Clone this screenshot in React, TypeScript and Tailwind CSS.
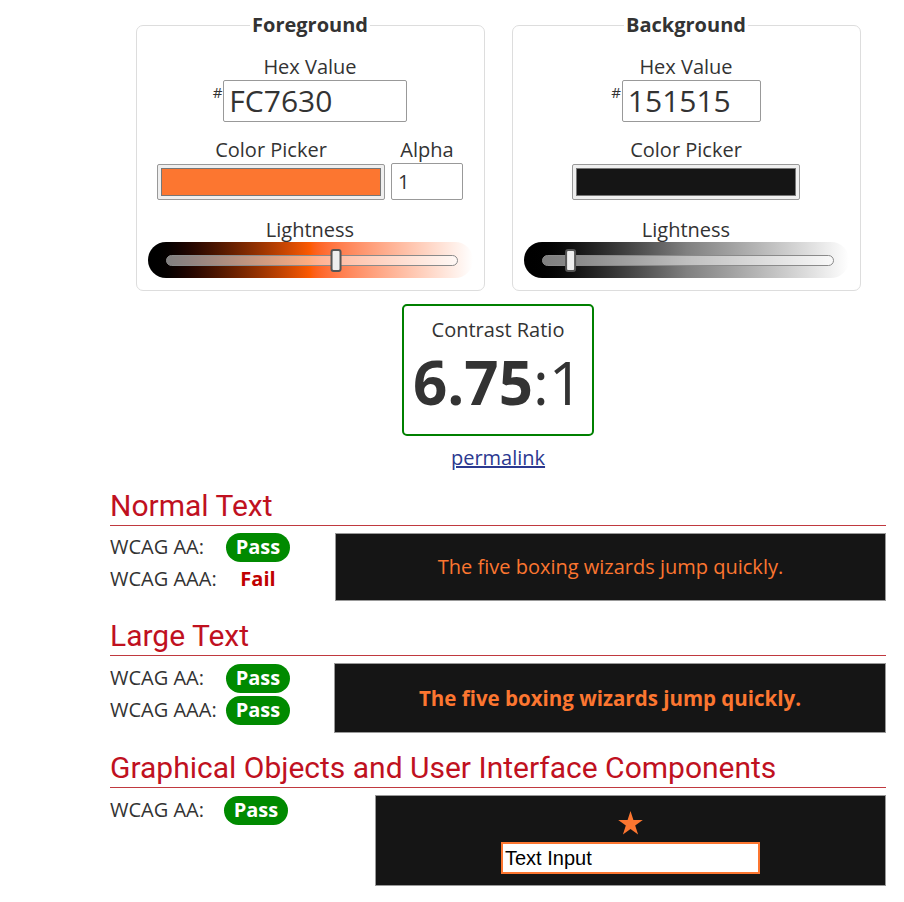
import React from "react";

const Slider = ({ gradient, pos }: { gradient: string; pos: number }) => (
  <div className={`mx-auto flex h-[36px] w-[325px] items-center rounded-full pl-[18px] pr-[15px] ${gradient}`}>
    <div className="relative h-[11px] w-full rounded-full border border-[#8a8a8a] bg-white/50">
      <div
        className="absolute top-[-7px] h-[23px] w-[11px] rounded-[3px] border-2 border-[#555] bg-[#eee]"
        style={{ left: `${pos * 100}%`, transform: `translateX(-${pos * 100}%)` }}
      />
    </div>
  </div>
);

const Panel = ({
  title,
  hex,
  hexWidth,
  swatch,
  alpha,
  gradient,
  pos,
}: {
  title: string;
  hex: string;
  hexWidth: string;
  swatch: string;
  alpha: boolean;
  gradient: string;
  pos: number;
}) => (
  <fieldset className="w-[348px] rounded-[7px] border border-[#ddd] px-[11px] pb-[12px]">
    <legend className="mx-auto px-[2px] text-[20px] font-bold leading-[26px] text-[#333]">{title}</legend>
    <div className="mt-[17px] text-center text-[20px] leading-[24px]">Hex Value</div>
    <div className="mt-[1px] flex justify-center">
      <span className="mt-[3px] mr-[1px] text-[15px] leading-[18px]">#</span>
      <div className={`flex h-[42px] items-center rounded-[2px] border border-[#999] px-[5px] text-[30px] leading-none ${hexWidth}`}>
        {hex}
      </div>
    </div>
    <div className="mt-[16px] flex justify-center gap-[6px]">
      <div className="flex flex-col items-center">
        <div className="text-[20px] leading-[24px]">Color Picker</div>
        <div className="mt-[2px] h-[36px] w-[228px] rounded-[2px] border border-[#999] bg-[#efefef] p-[3px]">
          <div className="h-full w-full border border-[#777]" style={{ background: swatch }} />
        </div>
      </div>
      {alpha && (
        <div className="flex flex-col items-center">
          <div className="text-[20px] leading-[24px]">Alpha</div>
          <div className="mt-[1px] flex h-[37px] w-[72px] items-center rounded-[2px] border border-[#999] px-[6px] text-[20px]">1</div>
        </div>
      )}
    </div>
    <div className="mt-[18px] text-center text-[20px] leading-[24px]">Lightness</div>
    <Slider gradient={gradient} pos={pos} />
  </fieldset>
);

const Pill = () => (
  <span className="inline-flex h-[29px] w-[64px] items-center justify-center rounded-full bg-[#008a00] text-[20px] font-bold text-white">
    Pass
  </span>
);

const Row = ({ label, children, w = "w-[116px]" }: { label: string; children: React.ReactNode; w?: string }) => (
  <div className="flex h-[32px] items-center">
    <span className={`text-[20px] ${w}`}>{label}</span>
    <span className="flex w-[64px] justify-center">{children}</span>
  </div>
);

const Heading = ({ children }: { children: React.ReactNode }) => (
  <h2 className="border-b border-[#c0393f] pb-[2px] font-['Roboto',sans-serif] text-[30px] leading-[35px] text-[#c0111f]">
    {children}
  </h2>
);

export default function App() {
  return (
    <div className="min-h-screen bg-white font-['Open_Sans',sans-serif] text-[#333]">
      <div className="ml-[110px] w-[776px] pt-[12px]">
        <div className="flex justify-center gap-[27px]">
          <Panel
            title="Foreground"
            hex="FC7630"
            hexWidth="w-[184px]"
            swatch="#fc7630"
            alpha
            gradient="bg-linear-to-r from-black via-[#fc5a03] to-white"
            pos={0.588}
          />
          <Panel
            title="Background"
            hex="151515"
            hexWidth="w-[139px]"
            swatch="#151515"
            alpha={false}
            gradient="bg-linear-to-r from-black via-[#808080] to-white"
            pos={0.082}
          />
        </div>

        <div className="mx-auto mt-[13px] flex h-[132px] w-[192px] flex-col items-center rounded-[5px] border-2 border-[#008000] pt-[11px]">
          <div className="text-[20px] leading-[26px]">Contrast Ratio</div>
          <div className="mt-[4px] text-[60px] leading-[70px]">
            <span className="font-bold">6.75</span>:1
          </div>
        </div>
        <div className="mt-[8px] text-center leading-[27px]">
          <a href="#" className="text-[20px] text-[#2b3990] underline">permalink</a>
        </div>

        <div className="mt-[15px]">
          <Heading>Normal Text</Heading>
          <div className="flex items-start">
            <div className="mt-[5px]">
              <Row label="WCAG AA:"><Pill /></Row>
              <Row label="WCAG AAA:"><span className="text-[20px] font-bold text-[#c00000]">Fail</span></Row>
            </div>
            <div className="mt-[7px] ml-[45px] flex h-[68px] flex-1 items-center justify-center border border-[#999] bg-[#151515] text-[20px] text-[#fc7630]">
              The five boxing wizards jump quickly.
            </div>
          </div>
        </div>

        <div className="mt-[17px]">
          <Heading>Large Text</Heading>
          <div className="flex items-start">
            <div className="mt-[6px]">
              <Row label="WCAG AA:"><Pill /></Row>
              <Row label="WCAG AAA:"><Pill /></Row>
            </div>
            <div className="mt-[7px] ml-[44px] flex h-[70px] flex-1 items-center justify-center border border-[#999] bg-[#151515] text-[20.5px] font-bold text-[#fc7630]">
              The five boxing wizards jump quickly.
            </div>
          </div>
        </div>

        <div className="mt-[17px]">
          <Heading>Graphical Objects and User Interface Components</Heading>
          <div className="flex items-start">
            <div className="mt-[6px]">
              <Row label="WCAG AA:" w="w-[114px]"><Pill /></Row>
            </div>
            <div className="mt-[7px] ml-[87px] flex h-[91px] flex-1 flex-col items-center border border-[#999] bg-[#151515] pt-[15px]">
              <svg width="25" height="24" viewBox="0 0 24 23" fill="#fc7630">
                <polygon points="12,0 14.8,8.6 23.8,8.6 16.5,13.9 19.3,22.6 12,17.3 4.7,22.6 7.5,13.9 0.2,8.6 9.2,8.6" />
              </svg>
              <div className="mt-[7px] flex h-[32px] w-[259px] items-center border-2 border-[#fc7630] bg-white px-[2px] font-['Liberation_Sans',sans-serif] text-[20px] text-black">
                Text Input
              </div>
            </div>
          </div>
        </div>
      </div>
    </div>
  );
}
